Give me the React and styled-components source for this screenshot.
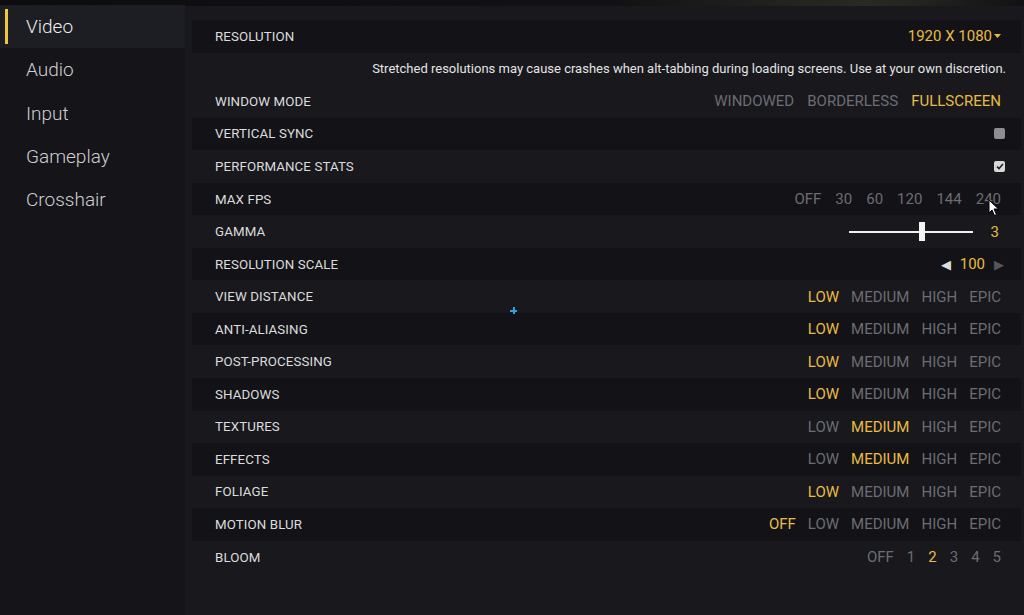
import React from 'react';
import styled, { createGlobalStyle } from 'styled-components';

const GlobalStyle = createGlobalStyle`
  html, body {
    margin: 0;
    padding: 0;
    background: #17171c;
    font-family: Roboto, "Liberation Sans", sans-serif;
    overflow: hidden;
  }
`;

const Screen = styled.div`
  position: relative;
  width: 1024px;
  height: 615px;
  display: flex;
  background: #18181d;
  overflow: hidden;
`;

const TopShade = styled.div`
  position: absolute;
  top: 0;
  left: 0;
  right: 0;
  height: 6px;
  background: linear-gradient(90deg, #0d0d10 0%, #121214 60%, #2a2a24 85%, #121214 100%);
`;

const Sidebar = styled.nav`
  width: 185px;
  padding-top: 5px;
  display: flex;
  flex-direction: column;
  background: #151519;
`;

const NavItem = styled.div`
  position: relative;
  height: 43.3px;
  display: flex;
  align-items: center;
  padding-left: 26px;
  font-size: 19px;
  font-weight: 300;
  color: ${p => (p.$active ? '#ececec' : '#cfcfd1')};
  background: ${p => (p.$active ? '#1d1e24' : 'transparent')};

  &::before {
    content: '';
    display: ${p => (p.$active ? 'block' : 'none')};
    position: absolute;
    left: 5px;
    top: 4px;
    bottom: 4px;
    width: 3px;
    background: #f0c540;
  }
`;

const Main = styled.main`
  flex: 1;
  margin-left: 7px;
  margin-right: 3px;
  padding-top: 20px;
  display: flex;
  flex-direction: column;
`;

const Row = styled.div`
  height: 32.56px;
  display: flex;
  align-items: center;
  justify-content: space-between;
  padding: 0 20px 0 23px;
  background: ${p => (p.$dark ? '#131317' : 'transparent')};
`;

const Label = styled.span`
  font-size: 13.3px;
  color: #dcdcdc;
  letter-spacing: 0.1px;
`;

const Note = styled.div`
  flex: 1;
  text-align: right;
  font-size: 13px;
  color: #e4e4e4;
  margin-right: -5px;
`;

const Options = styled.div`
  display: flex;
  align-items: center;
  gap: ${p => p.$gap || 12}px;
`;

const Option = styled.span`
  font-size: 15px;
  color: ${p => (p.$on ? '#e8bb45' : '#6c6c72')};
`;

const Value = styled.span`
  font-size: 15px;
  color: #e8bb45;
  display: flex;
  align-items: center;
  gap: 2px;
`;

const Checkbox = styled.span`
  width: 11px;
  height: 11px;
  margin-right: -4px;
  border-radius: 2px;
  background: ${p => (p.$checked ? '#d8d8d8' : '#8e8e92')};
  display: flex;
  align-items: center;
  justify-content: center;
`;

const SliderWrap = styled.div`
  display: flex;
  align-items: center;
  gap: 18px;
  margin-right: 2px;
`;

const Track = styled.div`
  position: relative;
  width: 124px;
  height: 2px;
  background: #f2f2f2;
`;

const Thumb = styled.span`
  position: absolute;
  top: -9px;
  width: 6px;
  height: 19px;
  background: #f4f4f4;
`;

const Stepper = styled.div`
  display: flex;
  align-items: center;
  gap: 9px;
  margin-right: -3px;
`;

const Arrow = styled.span`
  font-size: 13px;
  color: ${p => (p.$dim ? '#55555a' : '#dcdcdc')};
`;

const Crosshair = styled.div`
  position: absolute;
  left: 510px;
  top: 307px;
  width: 7px;
  height: 7px;

  &::before, &::after {
    content: '';
    position: absolute;
    background: #2aa3e0;
  }
  &::before { left: 3px; top: 0; width: 1.5px; height: 7px; }
  &::after { top: 3px; left: 0; height: 1.5px; width: 7px; }
`;

const Cursor = styled.svg`
  position: absolute;
  left: 988px;
  top: 199px;
`;

const QUALITY = ['LOW', 'MEDIUM', 'HIGH', 'EPIC'];

const Choice = ({ items, on, gap }) => (
  <Options $gap={gap}>
    {items.map(i => (
      <Option key={i} $on={i === on}>{i}</Option>
    ))}
  </Options>
);

const quality = [
  ['VIEW DISTANCE', 'LOW'],
  ['ANTI-ALIASING', 'LOW'],
  ['POST-PROCESSING', 'LOW'],
  ['SHADOWS', 'LOW'],
  ['TEXTURES', 'MEDIUM'],
  ['EFFECTS', 'MEDIUM'],
  ['FOLIAGE', 'LOW'],
];

export default function App() {
  return (
    <>
      <GlobalStyle />
      <Screen>
        <TopShade />
        <Sidebar>
          <NavItem $active>Video</NavItem>
          <NavItem>Audio</NavItem>
          <NavItem>Input</NavItem>
          <NavItem>Gameplay</NavItem>
          <NavItem>Crosshair</NavItem>
        </Sidebar>
        <Main>
          <Row $dark>
            <Label>RESOLUTION</Label>
            <Value>
              1920 X 1080
              <svg width="7" height="5" viewBox="0 0 7 5"><path d="M0 0h7L3.5 4z" fill="#e8bb45" /></svg>
            </Value>
          </Row>
          <Row>
            <Note>Stretched resolutions may cause crashes when alt-tabbing during loading screens. Use at your own discretion.</Note>
          </Row>
          <Row>
            <Label>WINDOW MODE</Label>
            <Choice items={['WINDOWED', 'BORDERLESS', 'FULLSCREEN']} on="FULLSCREEN" gap={13} />
          </Row>
          <Row $dark>
            <Label>VERTICAL SYNC</Label>
            <Checkbox />
          </Row>
          <Row>
            <Label>PERFORMANCE STATS</Label>
            <Checkbox $checked>
              <svg width="8" height="7" viewBox="0 0 8 7"><path d="M1 3.6l2 2L7 1" stroke="#222" strokeWidth="1.6" fill="none" /></svg>
            </Checkbox>
          </Row>
          <Row $dark>
            <Label>MAX FPS</Label>
            <Choice items={['OFF', '30', '60', '120', '144', '240']} on="" gap={14} />
          </Row>
          <Row>
            <Label>GAMMA</Label>
            <SliderWrap>
              <Track>
                <Thumb style={{ left: `${(70 / 124) * 100}%` }} />
              </Track>
              <Value>3</Value>
            </SliderWrap>
          </Row>
          <Row $dark>
            <Label>RESOLUTION SCALE</Label>
            <Stepper>
              <Arrow>◀</Arrow>
              <Value>100</Value>
              <Arrow $dim>▶</Arrow>
            </Stepper>
          </Row>
          {quality.map(([name, on], i) => (
            <Row key={name} $dark={i % 2 === 1}>
              <Label>{name}</Label>
              <Choice items={QUALITY} on={on} />
            </Row>
          ))}
          <Row $dark>
            <Label>MOTION BLUR</Label>
            <Choice items={['OFF', ...QUALITY]} on="OFF" />
          </Row>
          <Row>
            <Label>BLOOM</Label>
            <Choice items={['OFF', '1', '2', '3', '4', '5']} on="2" gap={13} />
          </Row>
        </Main>
        <Crosshair />
        <Cursor width="12" height="18" viewBox="0 0 12 18">
          <path d="M1 1v13l3-3 2.5 5.5 2-1L6 10h4.5z" fill="#fff" stroke="#000" strokeWidth="1" />
        </Cursor>
      </Screen>
    </>
  );
}
